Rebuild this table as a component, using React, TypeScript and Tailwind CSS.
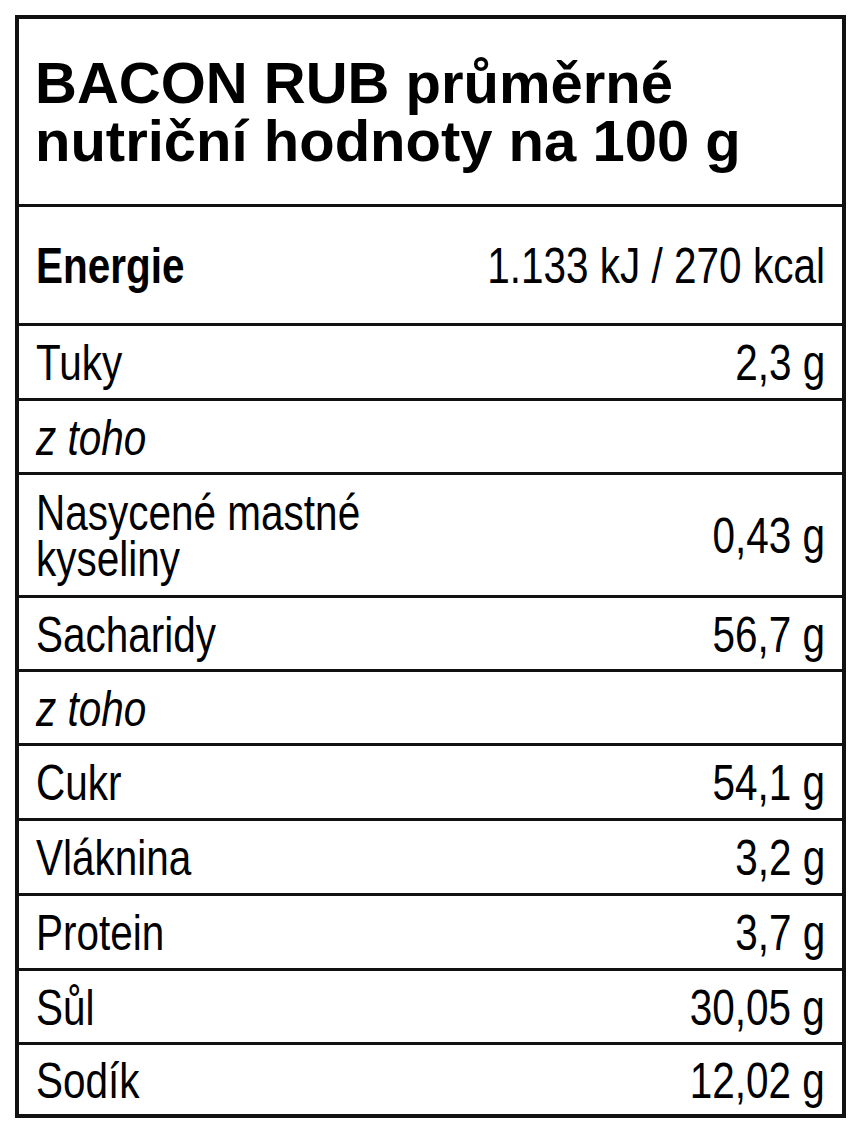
const sans = "font-['Liberation_Sans',Arial,sans-serif]";

type Row = {
  label: string[];
  value?: string;
  kind?: "bold" | "italic";
  h: string;
};

const rows: Row[] = [
  { label: ["Energie"], value: "1.133 kJ / 270 kcal", kind: "bold", h: "h-[119px]" },
  { label: ["Tuky"], value: "2,3 g", h: "h-[75px]" },
  { label: ["z toho"], kind: "italic", h: "h-[74px]" },
  { label: ["Nasycené mastné", "kyseliny"], value: "0,43 g", h: "h-[123px]" },
  { label: ["Sacharidy"], value: "56,7 g", h: "h-[74px]" },
  { label: ["z toho"], kind: "italic", h: "h-[74px]" },
  { label: ["Cukr"], value: "54,1 g", h: "h-[75px]" },
  { label: ["Vláknina"], value: "3,2 g", h: "h-[75px]" },
  { label: ["Protein"], value: "3,7 g", h: "h-[75px]" },
  { label: ["Sůl"], value: "30,05 g", h: "h-[74px]" },
  { label: ["Sodík"], value: "12,02 g", h: "h-[72px]" },
];

// the label uses a condensed face; without Arial Narrow we squeeze Liberation Sans
function NutritionRow({ row }: { row: Row }) {
  const labelClass =
    row.kind === "bold" ? "font-bold" : row.kind === "italic" ? "italic" : "";
  return (
    <div
      className={`flex ${row.h} items-center justify-between border-t-[3px] border-[#111] px-[17px] pt-[2px]`}
    >
      <span
        className={`${labelClass} inline-block origin-left scale-x-[0.81] whitespace-nowrap leading-[46px]`}
      >
        {row.label.map((line, i) => (
          <span key={i} className="block">
            {line}
          </span>
        ))}
      </span>
      {row.value && (
        <span className="inline-block origin-right scale-x-[0.81] whitespace-nowrap leading-[46px]">
          {row.value}
        </span>
      )}
    </div>
  );
}

export default function App() {
  return (
    <div className="min-h-[1134px] w-[863px] bg-white pl-[15px] pt-[15px]">
      <div
        className={`flex w-[831px] flex-col border-[4px] border-[#111] text-[50px] text-black ${sans}`}
      >
        <div className="flex h-[185px] items-center px-4">
          <h1 className="text-[58px] font-bold leading-[58px]">
            BACON RUB průměrné
            <br />
            nutriční hodnoty na 100 g
          </h1>
        </div>
        {rows.map((row, i) => (
          <NutritionRow key={i} row={row} />
        ))}
      </div>
    </div>
  );
}
